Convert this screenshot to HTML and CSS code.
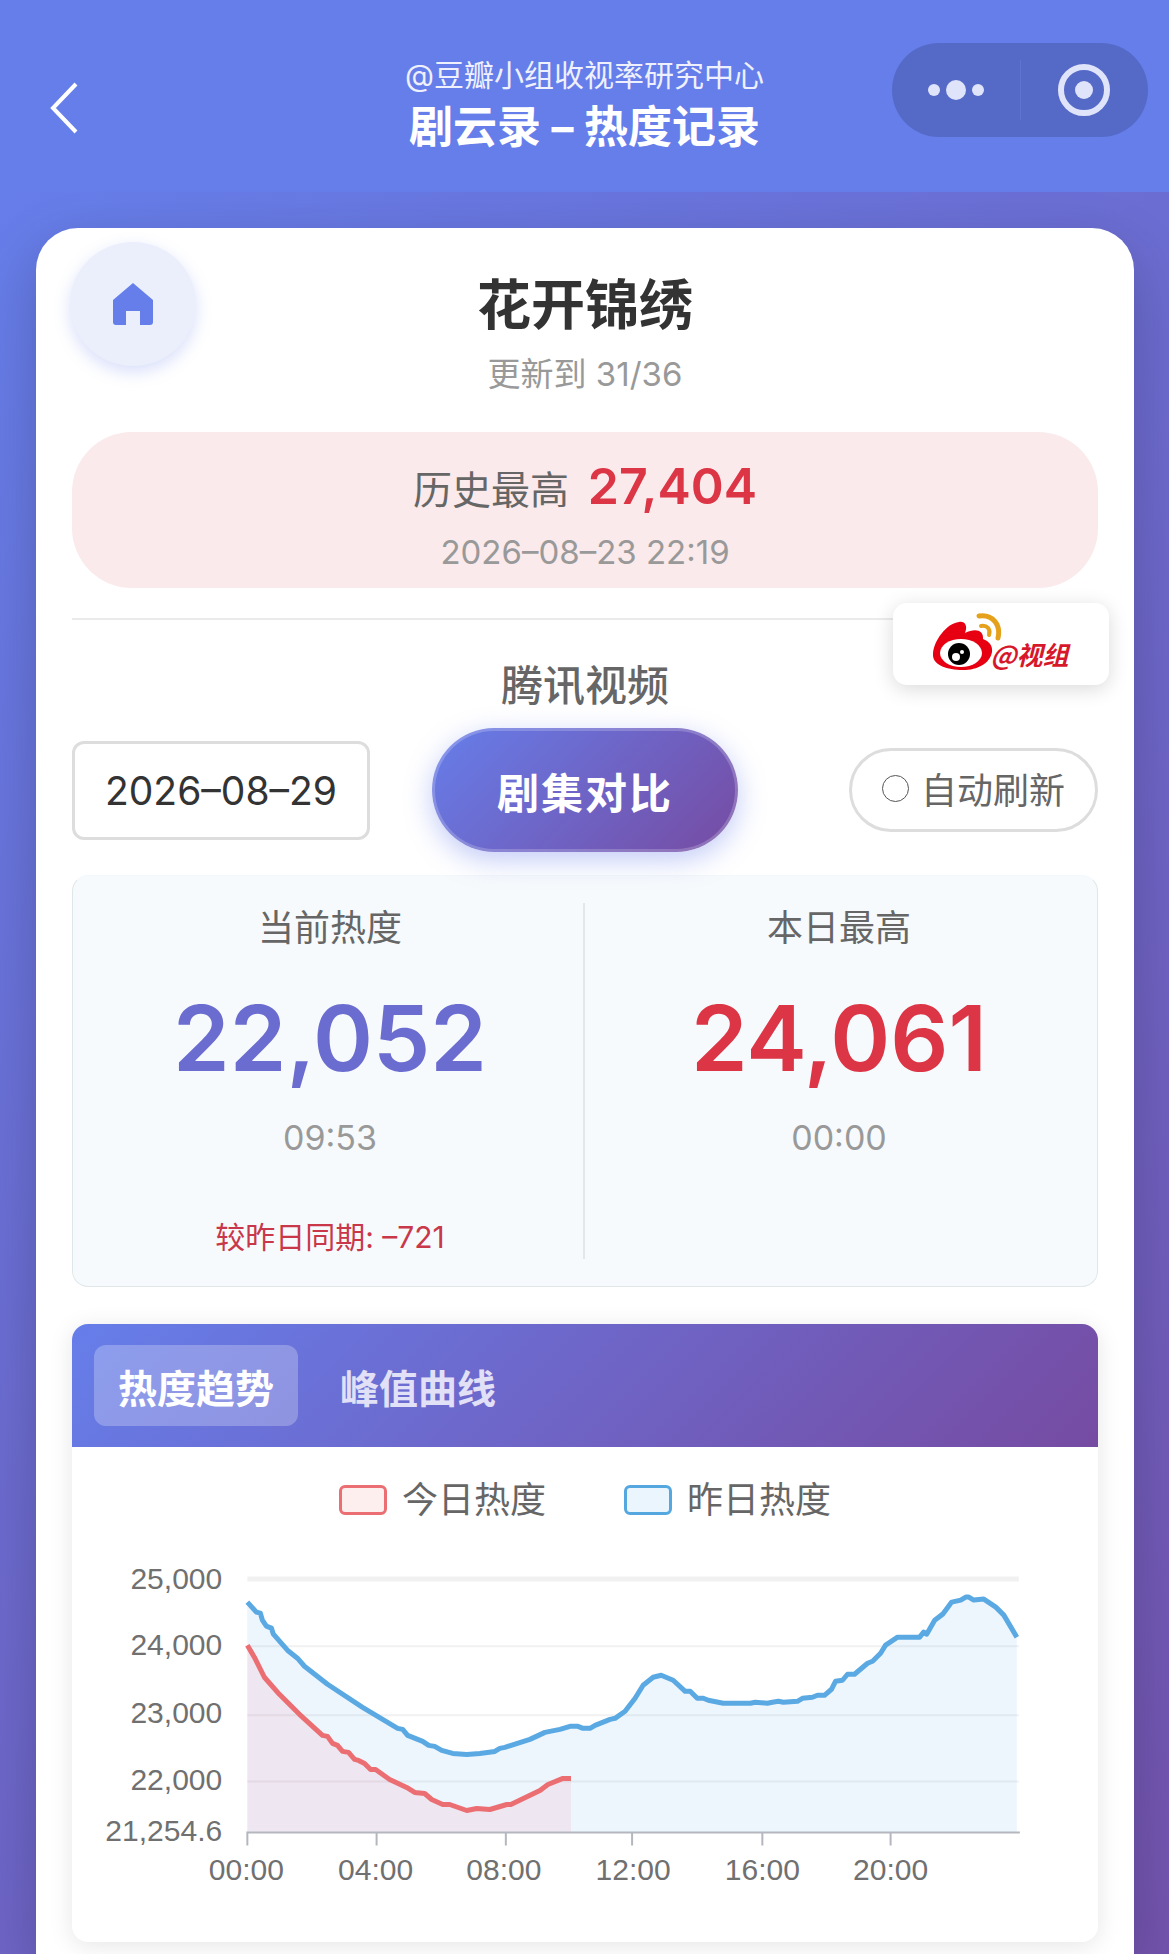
FILE: index.html
```
<!DOCTYPE html>
<html lang="zh-CN">
<head>
    <meta charset="UTF-8">
    <meta name="viewport" content="width=device-width, initial-scale=1.0">
    <title>剧云录 – 热度记录</title>
    <link rel="stylesheet" href="styles.css">
</head>
<body>
    <header class="nav-bar">
        <button type="button" class="back-button" aria-label="返回">
            <svg width="30" height="52" viewBox="0 0 30 52" fill="none" stroke="#fff" stroke-width="4">
                <path d="M27 2 L4 26 L27 50"/>
            </svg>
        </button>
        <div class="nav-title">
            <p class="nav-source">@豆瓣小组收视率研究中心</p>
            <p class="nav-name">剧云录 – 热度记录</p>
        </div>
        <div class="capsule">
            <button type="button" class="capsule-button" aria-label="更多">
                <svg width="60" height="24" viewBox="0 0 60 24" fill="#dfe4fa">
                    <circle cx="8" cy="12" r="6"/>
                    <circle cx="30" cy="12" r="10"/>
                    <circle cx="52" cy="12" r="6"/>
                </svg>
            </button>
            <button type="button" class="capsule-button" aria-label="关闭">
                <svg width="54" height="54" viewBox="0 0 54 54">
                    <circle cx="27" cy="27" r="23" fill="none" stroke="#dfe4fa" stroke-width="6"/>
                    <circle cx="27" cy="27" r="9" fill="#dfe4fa"/>
                </svg>
            </button>
        </div>
    </header>

    <main class="page">
        <section class="card">
            <a href="#" class="home-button" aria-label="首页">
                <svg width="44" height="46" viewBox="0 0 44 46" fill="#667eea">
                    <path d="M22 2 L42 19 V41 Q42 44 39 44 H29 V30 H15 V44 H5 Q2 44 2 41 V19 Z"/>
                </svg>
            </a>

            <h1 class="drama-title">花开锦绣</h1>
            <p class="drama-update">更新到 31/36</p>

            <div class="record">
                <p class="record-line">历史最高 <strong class="record-value">27,404</strong></p>
                <p class="record-time">2026–08–23 22:19</p>
            </div>

            <div class="platform">
                <h2 class="platform-name">腾讯视频</h2>
                <!-- 微博标识 -->
                <a href="#" class="weibo-badge">
                    <svg class="weibo-logo" width="72" height="62" viewBox="0 0 72 62">
                        <path d="M2 42 C2 28 16 10 28 9 C34 8 37 13 34 20 C44 15 53 17 52 26 C58 28 62 33 61 39 C59 51 45 58 29 57 C13 56 2 51 2 42 Z" fill="#e60012"/>
                        <ellipse cx="30" cy="40" rx="21" ry="14" fill="#fff"/>
                        <circle cx="28" cy="41" r="11" fill="#000"/>
                        <circle cx="25" cy="44" r="4" fill="#fff"/>
                        <circle cx="31" cy="39" r="2" fill="#fff"/>
                        <path d="M48 3 C62 1 70 12 67 25" fill="none" stroke="#e6a11c" stroke-width="5" stroke-linecap="round"/>
                        <path d="M50 13 C56 12 60 16 58 22" fill="none" stroke="#e6a11c" stroke-width="4" stroke-linecap="round"/>
                    </svg>
                    <span class="weibo-name">@视组</span>
                </a>
            </div>

            <div class="toolbar">
                <input type="text" class="date-input" value="2026–08–29" aria-label="日期">
                <button type="button" class="compare-button">剧集对比</button>
                <label class="auto-refresh" for="auto">
                    <input type="checkbox" id="auto" class="auto-check">
                    自动刷新
                </label>
            </div>

            <div class="stats">
                <div class="stat">
                    <p class="stat-label">当前热度</p>
                    <p class="stat-value">22,052</p>
                    <p class="stat-time">09:53</p>
                    <p class="stat-diff">较昨日同期: –721</p>
                </div>
                <div class="stat">
                    <p class="stat-label">本日最高</p>
                    <p class="stat-value stat-value-max">24,061</p>
                    <p class="stat-time">00:00</p>
                </div>
            </div>

            <div class="chart-card">
                <div class="tabs">
                    <button type="button" class="tab tab-active">热度趋势</button>
                    <button type="button" class="tab">峰值曲线</button>
                </div>
                <div class="legend">
                    <span class="legend-item"><i class="legend-box legend-today"></i>今日热度</span>
                    <span class="legend-item"><i class="legend-box legend-yesterday"></i>昨日热度</span>
                </div>
                <!-- 坐标原点在绘图区左上角 -->
                <svg class="chart" viewBox="-175 -31 1024 393">
                    <g fill="none" stroke="#f1f1f1" stroke-width="2">
                        <path d="M0 0 H770" stroke-width="5"/>
                        <path d="M0 67 H770 M0 136 H770 M0 202 H770"/>
                    </g>
                    <path fill="#4a9fe8" fill-opacity="0.1" d="M0 23 L9 33 13 34 15 41 19 47 24 49 26 55 40 71 50 79 57 87 80 105 115 128 130 137 150 149 155 150 160 156 175 162 181 166 187 167 194 171 205 174 219 175 232 174 247 172 252 169 257 168 282 160 297 153 312 150 322 147 330 147 335 149 342 149 347 146 362 140 367 139 377 132 387 119 395 106 405 98 413 96 425 101 437 112 442 112 449 119 455 119 460 121 475 124 502 124 507 123 519 124 524 123 530 122 535 123 549 122 554 119 564 118 569 116 576 116 583 110 587 102 594 101 599 95 606 95 619 84 624 82 632 74 637 66 649 58 671 58 675 53 678 55 686 41 694 35 703 23 712 21 717 18 720 18 725 21 735 20 747 28 755 36 768 58 V253 H0 Z"/>
                    <path fill="#ff6384" fill-opacity="0.1" d="M0 66 L7 78 17 98 32 115 52 135 75 156 80 157 85 164 90 166 95 172 101 173 107 180 111 181 117 184 123 190 128 190 142 200 159 208 167 213 177 214 184 220 195 225 202 225 219 231 229 229 242 230 259 225 263 225 292 211 300 205 315 199 323 199 V253 H0 Z"/>
                    <path fill="none" stroke="#5aa9e3" stroke-width="5" stroke-linejoin="round" d="M0 23 L9 33 13 34 15 41 19 47 24 49 26 55 40 71 50 79 57 87 80 105 115 128 130 137 150 149 155 150 160 156 175 162 181 166 187 167 194 171 205 174 219 175 232 174 247 172 252 169 257 168 282 160 297 153 312 150 322 147 330 147 335 149 342 149 347 146 362 140 367 139 377 132 387 119 395 106 405 98 413 96 425 101 437 112 442 112 449 119 455 119 460 121 475 124 502 124 507 123 519 124 524 123 530 122 535 123 549 122 554 119 564 118 569 116 576 116 583 110 587 102 594 101 599 95 606 95 619 84 624 82 632 74 637 66 649 58 671 58 675 53 678 55 686 41 694 35 703 23 712 21 717 18 720 18 725 21 735 20 747 28 755 36 768 58"/>
                    <path fill="none" stroke="#eb6f72" stroke-width="5" stroke-linejoin="round" d="M0 66 L7 78 17 98 32 115 52 135 75 156 80 157 85 164 90 166 95 172 101 173 107 180 111 181 117 184 123 190 128 190 142 200 159 208 167 213 177 214 184 220 195 225 202 225 219 231 229 229 242 230 259 225 263 225 292 211 300 205 315 199 323 199"/>
                    <path fill="none" stroke="#b4b8be" stroke-width="2" d="M-1 253 H771 M0 253 V266 M129 253 V266 M258 253 V266 M384 253 V266 M514 253 V266 M642 253 V266"/>
                    <g class="chart-text" text-anchor="end">
                        <text x="-25" y="10">25,000</text>
                        <text x="-25" y="76">24,000</text>
                        <text x="-25" y="144">23,000</text>
                        <text x="-25" y="211">22,000</text>
                        <text x="-25" y="261">21,254.6</text>
                    </g>
                    <g class="chart-text" text-anchor="middle">
                        <text x="-1" y="300">00:00</text>
                        <text x="128" y="300">04:00</text>
                        <text x="256" y="300">08:00</text>
                        <text x="385" y="300">12:00</text>
                        <text x="514" y="300">16:00</text>
                        <text x="642" y="300">20:00</text>
                    </g>
                </svg>
            </div>
        </section>
    </main>
</body>
</html>
```
FILE: styles.css
```
* {
    box-sizing: border-box;
}

body {
    margin: 0;
    min-height: 100vh;
    display: flex;
    flex-direction: column;
    font-family: Inter, "Noto Sans CJK SC", sans-serif;
    color: #333;
}

h1, h2, p {
    margin: 0;
}

button {
    font-family: inherit;
    border: none;
    background: none;
    padding: 0;
    cursor: pointer;
}

svg {
    display: block;
}

/* 顶部导航 */
.nav-bar {
    display: grid;
    grid-template-columns: 1fr auto 1fr;
    height: 192px;
    padding: 43px 21px 0;
    background: #667eea;
    color: #fff;
}

.back-button {
    justify-self: start;
    align-self: start;
    margin-top: 39px;
    margin-left: 28px;
}

.nav-title {
    padding-top: 10px;
    text-align: center;
}

.nav-source {
    font-size: 30px;
    line-height: 44px;
    color: #eef1fd;
}

.nav-name {
    font-size: 44px;
    line-height: 60px;
    font-weight: 700;
}

.capsule {
    display: flex;
    align-items: center;
    justify-self: end;
    align-self: start;
    width: 256px;
    height: 94px;
    border-radius: 47px;
    background: #556ac7;
}

.capsule-button {
    flex: 1;
    height: 60px;
    display: flex;
    align-items: center;
    justify-content: center;
}

.capsule-button + .capsule-button {
    border-left: 1px solid #5f74d0;
}

/* 页面主体 */
.page {
    flex: 1;
    display: flex;
    padding: 36px 35px 0 36px;
    background: linear-gradient(135deg, #667eea 0%, #764ba2 120%);
}

.card {
    flex: 1;
    position: relative;
    padding: 38px 36px 12px;
    border-radius: 42px 42px 0 0;
    background: #fff;
    box-shadow: 0 20px 60px rgba(0, 0, 0, 0.2);
}

.home-button {
    position: absolute;
    top: 14px;
    left: 34px;
    width: 126px;
    height: 124px;
    display: flex;
    align-items: center;
    justify-content: center;
    border-radius: 50%;
    background: #ebeffc;
    box-shadow: 0 6px 16px rgba(102, 126, 234, 0.25);
}

.drama-title {
    font-size: 54px;
    line-height: 80px;
    text-align: center;
}

.drama-update {
    margin-top: 8px;
    font-size: 33px;
    line-height: 40px;
    text-align: center;
    color: #999;
}

/* 历史最高 */
.record {
    margin-top: 38px;
    padding: 24px 0 16px;
    border-radius: 60px;
    background: #faeaeb;
    text-align: center;
}

.record-line {
    font-size: 39px;
    line-height: 60px;
    color: #666;
}

.record-value {
    margin-left: 8px;
    font-size: 50px;
    font-weight: 600;
    color: #dc3545;
}

.record-time {
    margin-top: 12px;
    font-size: 33px;
    line-height: 40px;
    color: #999;
}

/* 播放平台 */
.platform {
    position: relative;
    margin-top: 30px;
    padding-top: 40px;
    border-top: 2px solid #ebebeb;
}

.platform-name {
    font-size: 42px;
    line-height: 52px;
    font-weight: 500;
    text-align: center;
    color: #666;
}

.weibo-badge {
    position: absolute;
    top: -17px;
    right: -11px;
    width: 216px;
    height: 82px;
    display: flex;
    align-items: center;
    justify-content: center;
    border-radius: 14px;
    background: #fff;
    box-shadow: 0 4px 20px rgba(0, 0, 0, 0.15);
    text-decoration: none;
}

.weibo-name {
    margin-left: -13px;
    padding: 20px 2px 0 0;
    font-family: "Noto Sans CJK SC", sans-serif;
    font-size: 26px;
    line-height: 38px;
    font-weight: 700;
    font-style: italic;
    color: #d7182a;
}

/* 日期、对比、自动刷新 */
.toolbar {
    display: grid;
    grid-template-columns: 1fr auto 1fr;
    align-items: center;
    margin-top: 16px;
}

.date-input {
    width: 298px;
    height: 99px;
    border: 3px solid #ddd;
    border-radius: 12px;
    background: #fff;
    font-family: inherit;
    font-size: 39px;
    text-align: center;
    color: #333;
}

.compare-button {
    height: 124px;
    width: 306px;
    border: 3px solid rgba(255, 255, 255, 0.2);
    border-radius: 62px;
    background: linear-gradient(135deg, #667eea 0%, #764ba2 100%) border-box;
    box-shadow: 0 8px 28px rgba(102, 126, 234, 0.4);
    font-size: 42px;
    font-weight: 700;
    letter-spacing: 2px;
    color: #fff;
}

.auto-refresh {
    display: flex;
    align-items: center;
    justify-content: center;
    justify-self: end;
    gap: 12px;
    width: 249px;
    height: 84px;
    padding-bottom: 4px;
    border: 3px solid #ddd;
    border-radius: 42px;
    font-size: 36px;
    color: #666;
}

.auto-check {
    appearance: none;
    width: 27px;
    height: 27px;
    margin: 0;
    border: 1px solid #555;
    border-radius: 50%;
}

/* 热度数据 */
.stats {
    display: grid;
    grid-template-columns: 1fr 1fr;
    margin-top: 23px;
    padding: 27px 4px;
    border: 1px solid #e0e7ea;
    border-top-color: #f4f8fa;
    border-radius: 16px;
    background: #f7fafc;
    text-align: center;
}

.stat {
    height: 356px;
}

.stat:first-child {
    border-right: 2px solid #e4e7ea;
}

.stat-label {
    font-size: 36px;
    line-height: 50px;
    color: #666;
}

.stat-value {
    margin-top: 30px;
    font-size: 91px;
    line-height: 110px;
    font-weight: 600;
    color: #6b6ccf;
}

.stat-value-max {
    color: #dc3545;
}

.stat-time {
    margin-top: 20px;
    font-size: 34px;
    line-height: 50px;
    color: #999;
}

.stat-diff {
    margin-top: 52px;
    font-size: 30px;
    line-height: 44px;
    color: #c8374a;
}

/* 图表 */
.chart-card {
    margin-top: 37px;
    border-radius: 16px;
    background: #fff;
    box-shadow: 0 4px 24px rgba(0, 0, 0, 0.1);
}

.tabs {
    display: flex;
    align-items: center;
    gap: 18px;
    height: 123px;
    padding: 0 22px;
    border-radius: 16px 16px 0 0;
    background: linear-gradient(135deg, #667eea 0%, #764ba2 100%);
}

.tab {
    height: 81px;
    padding: 0 24px;
    border-radius: 12px;
    font-size: 39px;
    font-weight: 700;
    color: #e2e0f6;
}

.tab-active {
    background: rgba(255, 255, 255, 0.25);
    color: #fff;
}

.legend {
    display: flex;
    justify-content: center;
    gap: 78px;
    padding-top: 28px;
}

.legend-item {
    display: flex;
    align-items: center;
    gap: 15px;
    font-size: 36px;
    line-height: 50px;
    color: #666;
}

.legend-box {
    width: 48px;
    height: 30px;
    border: 3px solid #eb6f72;
    border-radius: 6px;
    background: #fdefee;
}

.legend-yesterday {
    border-color: #55a7e0;
    background: #ebf5fd;
}

.chart {
    width: 100%;
    margin-top: 23px;
}

.chart-text {
    font-family: "Liberation Sans", Arial, sans-serif;
    font-size: 30px;
    fill: #707070;
}
```
